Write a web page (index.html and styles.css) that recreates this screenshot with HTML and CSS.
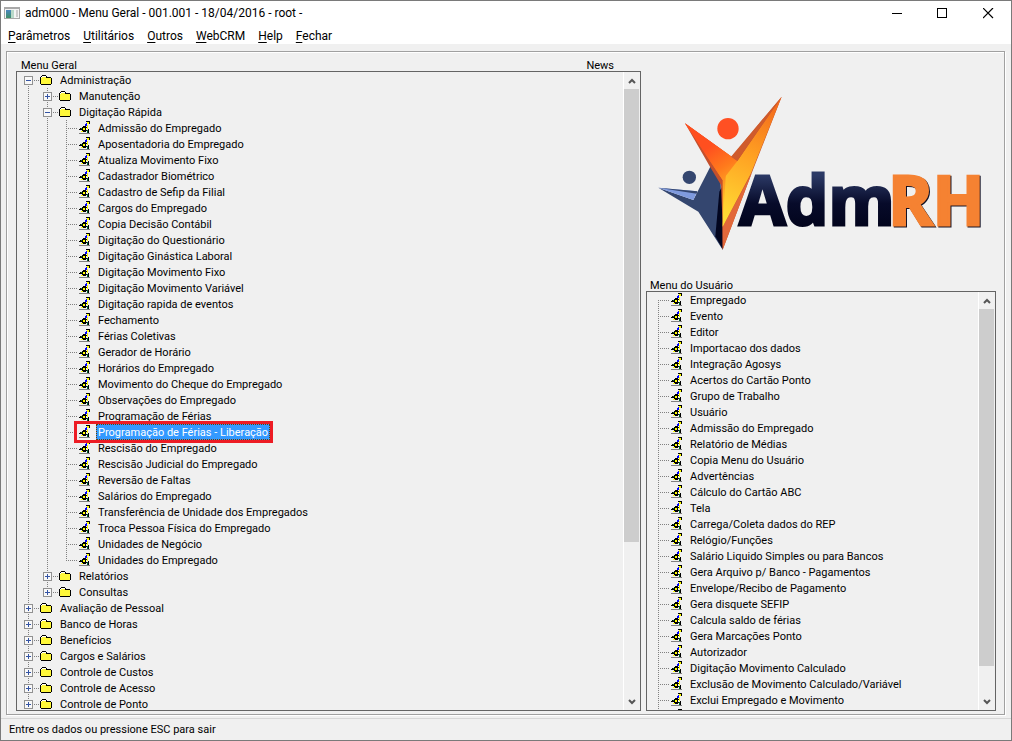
FILE: index.html
```html
<!DOCTYPE html>
<html lang="pt-BR">
<head>
<meta charset="utf-8">
<title>adm000 - Menu Geral</title>
<link rel="stylesheet" href="styles.css">
</head>
<body>
<svg class="defs" aria-hidden="true">
  <symbol id="folder" viewBox="0 0 14 14" shape-rendering="crispEdges">
    <path fill="#000" d="M2 3h4v1h1v1h4v1h1v6h-1v1H1v-1H0V5h1V4h1z"/>
    <path fill="#fff" d="M2 4h4v1H2zM1 5h1v1H1z"/>
    <path fill="#fff83a" d="M2 5h4v1h5v6H1V6h1z"/>
    <path fill="#000" d="M6 5h5v1H6z"/>
  </symbol>
  <symbol id="person" viewBox="0 0 14 14" shape-rendering="crispEdges">
    <path fill="#808080" d="M1 13h11v1H1z"/>
    <path fill="#000" d="M8 1h4v1H8zM11 2h1v2h-1zM5 6h3v1H5zM4 7h5v1H4zM2 8h6v1H2zM1 9h7v1H1zM4 10h6v1H4zM5 11h3v1H5zM10 9h1v4h-1z"/>
    <path fill="#ff0" d="M9 2h2v2H9zM5 8h2v2H5zM9 5h1v4H9zM3 11h2v1H3z"/>
    <path fill="#00f" d="M8 3h1v1H8zM7 4h2v2H7z"/>
    <path fill="#063" d="M9 10h1v3H9zM3 8h1v1H3z"/>
  </symbol>
  <symbol id="up" viewBox="0 0 8 6"><path d="M1 5l3-3 3 3" fill="none" stroke="#555" stroke-width="2"/></symbol>
  <symbol id="down" viewBox="0 0 8 6"><path d="M1 1l3 3 3-3" fill="none" stroke="#555" stroke-width="2"/></symbol>
  <symbol id="plus" viewBox="0 0 9 9" shape-rendering="crispEdges">
    <path fill="#919191" d="M0 0h9v9H0z"/><path fill="#f8f8f8" d="M1 1h7v7H1z"/><path fill="#3454a4" d="M2 4h5v1H2zM4 2h1v5H4z"/>
  </symbol>
  <symbol id="minus" viewBox="0 0 9 9" shape-rendering="crispEdges">
    <path fill="#919191" d="M0 0h9v9H0z"/><path fill="#f8f8f8" d="M1 1h7v7H1z"/><path fill="#3454a4" d="M2 4h5v1H2z"/>
  </symbol>
</svg>
<div class="window">
  <header class="header">
    <div class="titlebar">
      <svg class="app-icon" width="16" height="12" viewBox="0 0 16 12" aria-hidden="true">
        <defs><linearGradient id="screen" x2="0" y2="1"><stop stop-color="#4a86c0"/><stop offset="1" stop-color="#3f8f66"/></linearGradient></defs>
        <path fill="#a8a8a8" d="M0 0h16v12H0z"/><path fill="#f4f4f4" d="M1 2h14v9H1z"/>
        <path fill="url(#screen)" d="M2 3h5v8H2z"/><path fill="#b9d8c8" d="M7 3h3v8H7z"/><path fill="#ccc" d="M12 3h2v7h-2z"/>
      </svg>
      <span class="title">adm000 - Menu Geral - 001.001 - 18/04/2016 - root -</span>
      <button class="win-btn" type="button" aria-label="Minimizar"><svg width="11" height="11" shape-rendering="crispEdges"><path d="M1 5h10v1H1z"/></svg></button>
      <button class="win-btn" type="button" aria-label="Maximizar"><svg width="11" height="11" shape-rendering="crispEdges"><path d="M0 0h10v10H0zM1 1v8h8V1z" fill-rule="evenodd"/></svg></button>
      <button class="win-btn" type="button" aria-label="Fechar janela"><svg width="11" height="11"><path d="M0 0l10 10M10 0L0 10" stroke="#000" stroke-width="1.200"/></svg></button>
    </div>
    <nav class="menubar">
      <button type="button"><u>P</u>arâmetros</button>
      <button type="button"><u>U</u>tilitários</button>
      <button type="button"><u>O</u>utros</button>
      <button type="button"><u>W</u>ebCRM</button>
      <button type="button"><u>H</u>elp</button>
      <button type="button"><u>F</u>echar</button>
    </nav>
  </header>
  <main class="frame">
    <section class="column">
      <div class="caption caption-main"><span>Menu Geral</span><span class="news">News</span></div>
      <div class="box">
        <ul class="tree">
          <li><button class="toggle" type="button" aria-label="Recolher"><svg><use href="#minus"/></svg></button><div class="node"><svg><use href="#folder"/></svg><span>Administração</span></div>
            <ul>
              <li><button class="toggle" type="button" aria-label="Expandir"><svg><use href="#plus"/></svg></button><div class="node"><svg><use href="#folder"/></svg><span>Manutenção</span></div></li>
              <li><button class="toggle" type="button" aria-label="Recolher"><svg><use href="#minus"/></svg></button><div class="node"><svg><use href="#folder"/></svg><span>Digitação Rápida</span></div>
                <ul>
                  <li><div class="node"><svg><use href="#person"/></svg><span>Admissão do Empregado</span></div></li>
                  <li><div class="node"><svg><use href="#person"/></svg><span>Aposentadoria do Empregado</span></div></li>
                  <li><div class="node"><svg><use href="#person"/></svg><span>Atualiza Movimento Fixo</span></div></li>
                  <li><div class="node"><svg><use href="#person"/></svg><span>Cadastrador Biométrico</span></div></li>
                  <li><div class="node"><svg><use href="#person"/></svg><span>Cadastro de Sefip da Filial</span></div></li>
                  <li><div class="node"><svg><use href="#person"/></svg><span>Cargos do Empregado</span></div></li>
                  <li><div class="node"><svg><use href="#person"/></svg><span>Copia Decisão Contábil</span></div></li>
                  <li><div class="node"><svg><use href="#person"/></svg><span>Digitação do Questionário</span></div></li>
                  <li><div class="node"><svg><use href="#person"/></svg><span>Digitação Ginástica Laboral</span></div></li>
                  <li><div class="node"><svg><use href="#person"/></svg><span>Digitação Movimento Fixo</span></div></li>
                  <li><div class="node"><svg><use href="#person"/></svg><span>Digitação Movimento Variável</span></div></li>
                  <li><div class="node"><svg><use href="#person"/></svg><span>Digitação rapida de eventos</span></div></li>
                  <li><div class="node"><svg><use href="#person"/></svg><span>Fechamento</span></div></li>
                  <li><div class="node"><svg><use href="#person"/></svg><span>Férias Coletivas</span></div></li>
                  <li><div class="node"><svg><use href="#person"/></svg><span>Gerador de Horário</span></div></li>
                  <li><div class="node"><svg><use href="#person"/></svg><span>Horários do Empregado</span></div></li>
                  <li><div class="node"><svg><use href="#person"/></svg><span>Movimento do Cheque do Empregado</span></div></li>
                  <li><div class="node"><svg><use href="#person"/></svg><span>Observações do Empregado</span></div></li>
                  <li><div class="node"><svg><use href="#person"/></svg><span>Programação de Férias</span></div></li>
                  <li><div class="node selected"><svg><use href="#person"/></svg><span>Programação de Férias - Liberação</span></div></li>
                  <li><div class="node"><svg><use href="#person"/></svg><span>Rescisão do Empregado</span></div></li>
                  <li><div class="node"><svg><use href="#person"/></svg><span>Rescisão Judicial do Empregado</span></div></li>
                  <li><div class="node"><svg><use href="#person"/></svg><span>Reversão de Faltas</span></div></li>
                  <li><div class="node"><svg><use href="#person"/></svg><span>Salários do Empregado</span></div></li>
                  <li><div class="node"><svg><use href="#person"/></svg><span>Transferência de Unidade dos Empregados</span></div></li>
                  <li><div class="node"><svg><use href="#person"/></svg><span>Troca Pessoa Física do Empregado</span></div></li>
                  <li><div class="node"><svg><use href="#person"/></svg><span>Unidades de Negócio</span></div></li>
                  <li><div class="node"><svg><use href="#person"/></svg><span>Unidades do Empregado</span></div></li>
                </ul>
              </li>
              <li><button class="toggle" type="button" aria-label="Expandir"><svg><use href="#plus"/></svg></button><div class="node"><svg><use href="#folder"/></svg><span>Relatórios</span></div></li>
              <li><button class="toggle" type="button" aria-label="Expandir"><svg><use href="#plus"/></svg></button><div class="node"><svg><use href="#folder"/></svg><span>Consultas</span></div></li>
            </ul>
          </li>
          <li><button class="toggle" type="button" aria-label="Expandir"><svg><use href="#plus"/></svg></button><div class="node"><svg><use href="#folder"/></svg><span>Avaliação de Pessoal</span></div></li>
          <li><button class="toggle" type="button" aria-label="Expandir"><svg><use href="#plus"/></svg></button><div class="node"><svg><use href="#folder"/></svg><span>Banco de Horas</span></div></li>
          <li><button class="toggle" type="button" aria-label="Expandir"><svg><use href="#plus"/></svg></button><div class="node"><svg><use href="#folder"/></svg><span>Benefícios</span></div></li>
          <li><button class="toggle" type="button" aria-label="Expandir"><svg><use href="#plus"/></svg></button><div class="node"><svg><use href="#folder"/></svg><span>Cargos e Salários</span></div></li>
          <li><button class="toggle" type="button" aria-label="Expandir"><svg><use href="#plus"/></svg></button><div class="node"><svg><use href="#folder"/></svg><span>Controle de Custos</span></div></li>
          <li><button class="toggle" type="button" aria-label="Expandir"><svg><use href="#plus"/></svg></button><div class="node"><svg><use href="#folder"/></svg><span>Controle de Acesso</span></div></li>
          <li><button class="toggle" type="button" aria-label="Expandir"><svg><use href="#plus"/></svg></button><div class="node"><svg><use href="#folder"/></svg><span>Controle de Ponto</span></div></li>
        </ul>
        <div class="scrollbar">
          <button type="button" aria-label="Rolar para cima"><svg><use href="#up"/></svg></button>
          <div class="track"><div class="thumb" style="height:75%"></div></div>
          <button type="button" aria-label="Rolar para baixo"><svg><use href="#down"/></svg></button>
        </div>
      </div>
    </section>
    <section class="column side">
      <svg class="logo" viewBox="-12 -81 1050 660" role="img" aria-label="AdmRH">
        <defs>
          <linearGradient id="flame" gradientUnits="userSpaceOnUse" x1="170" y1="190" x2="280" y2="370">
            <stop stop-color="#ff4f1f"/><stop offset=".35" stop-color="#ff7a1c"/><stop offset=".8" stop-color="#ffc52a"/><stop offset="1" stop-color="#ffd83a"/>
          </linearGradient>
          <linearGradient id="arm" gradientUnits="userSpaceOnUse" x1="380" y1="60" x2="225" y2="400">
            <stop stop-color="#f26a1c"/><stop offset=".45" stop-color="#ffa022"/><stop offset="1" stop-color="#ffdc34"/>
          </linearGradient>
          <linearGradient id="navy" gradientUnits="userSpaceOnUse" x1="0" y1="270" x2="0" y2="425">
            <stop stop-color="#2c3a66"/><stop offset=".55" stop-color="#070b2a"/><stop offset="1" stop-color="#02041c"/>
          </linearGradient>
        </defs>
        <path fill="#34466f" d="M25 308L130 345 182 243 212 290 218 494 145 380z"/>
        <path fill="#7f9ade" d="M25 308L142 319 130 345z"/>
        <path fill="#34466f" d="M25 308L142 319 140 326z"/>
        <path fill="#02051f" d="M208 320L219 300V494L196 454z"/>
        <path fill="#c4502c" d="M105 115L245 215 395 35 305 265 218 494 217 400 213 300 180 245z"/>
        <path fill="#e2683a" d="M305 265L218 425V494z"/>
        <path fill="url(#flame)" d="M105 115L245 215 263 228 300 200 218 425V285z"/>
        <path fill="url(#arm)" d="M395 35L262 228 228 260 218 425 303 265z"/>
        <path fill="url(#flame)" d="M105 115L245 215 262 228 218 285z"/>
        <path fill="#cf5b2c" d="M395 35L243 215 262 228z"/>
        <circle cx="234" cy="131" r="32" fill="#ff5023"/>
        <circle cx="118" cy="277" r="20" fill="#34466f"/>
        <text class="logo-text" x="268" y="421" fill="url(#navy)" stroke="url(#navy)">Adm</text>
        <text class="logo-text" x="718" y="423" fill="#101024" stroke="#101024">RH</text>
        <text class="logo-text" x="715" y="420" fill="#f58232" stroke="#f58232">RH</text>
      </svg>
      <div class="caption caption-user">Menu do Usuário</div>
      <div class="box">
        <ul class="tree">
          <li><div class="node"><svg><use href="#person"/></svg><span>Empregado</span></div></li>
          <li><div class="node"><svg><use href="#person"/></svg><span>Evento</span></div></li>
          <li><div class="node"><svg><use href="#person"/></svg><span>Editor</span></div></li>
          <li><div class="node"><svg><use href="#person"/></svg><span>Importacao dos dados</span></div></li>
          <li><div class="node"><svg><use href="#person"/></svg><span>Integração Agosys</span></div></li>
          <li><div class="node"><svg><use href="#person"/></svg><span>Acertos do Cartão Ponto</span></div></li>
          <li><div class="node"><svg><use href="#person"/></svg><span>Grupo de Trabalho</span></div></li>
          <li><div class="node"><svg><use href="#person"/></svg><span>Usuário</span></div></li>
          <li><div class="node"><svg><use href="#person"/></svg><span>Admissão do Empregado</span></div></li>
          <li><div class="node"><svg><use href="#person"/></svg><span>Relatório de Médias</span></div></li>
          <li><div class="node"><svg><use href="#person"/></svg><span>Copia Menu do Usuário</span></div></li>
          <li><div class="node"><svg><use href="#person"/></svg><span>Advertências</span></div></li>
          <li><div class="node"><svg><use href="#person"/></svg><span>Cálculo do Cartão ABC</span></div></li>
          <li><div class="node"><svg><use href="#person"/></svg><span>Tela</span></div></li>
          <li><div class="node"><svg><use href="#person"/></svg><span>Carrega/Coleta dados do REP</span></div></li>
          <li><div class="node"><svg><use href="#person"/></svg><span>Relógio/Funções</span></div></li>
          <li><div class="node"><svg><use href="#person"/></svg><span>Salário Liquido Simples ou para Bancos</span></div></li>
          <li><div class="node"><svg><use href="#person"/></svg><span>Gera Arquivo p/ Banco - Pagamentos</span></div></li>
          <li><div class="node"><svg><use href="#person"/></svg><span>Envelope/Recibo de Pagamento</span></div></li>
          <li><div class="node"><svg><use href="#person"/></svg><span>Gera disquete SEFIP</span></div></li>
          <li><div class="node"><svg><use href="#person"/></svg><span>Calcula saldo de férias</span></div></li>
          <li><div class="node"><svg><use href="#person"/></svg><span>Gera Marcações Ponto</span></div></li>
          <li><div class="node"><svg><use href="#person"/></svg><span>Autorizador</span></div></li>
          <li><div class="node"><svg><use href="#person"/></svg><span>Digitação Movimento Calculado</span></div></li>
          <li><div class="node"><svg><use href="#person"/></svg><span>Exclusão de Movimento Calculado/Variável</span></div></li>
          <li><div class="node"><svg><use href="#person"/></svg><span>Exclui Empregado e Movimento</span></div></li>
          <li><div class="node"><svg><use href="#person"/></svg></div></li>
        </ul>
        <div class="scrollbar">
          <button type="button" aria-label="Rolar para cima"><svg><use href="#up"/></svg></button>
          <div class="track"><div class="thumb" style="height:93%"></div></div>
          <button type="button" aria-label="Rolar para baixo"><svg><use href="#down"/></svg></button>
        </div>
      </div>
    </section>
  </main>
  <footer class="status">Entre os dados ou pressione ESC para sair</footer>
</div>
</body>
</html>
```
FILE: styles.css
```css
* { box-sizing: border-box; }
body { margin: 0; background: #f0f0f0; color: #000; font: 11px/16px Roboto, "Liberation Sans", sans-serif; }
ul { margin: 0; padding: 0; list-style: none; }
button { margin: 0; padding: 0; border: 0; background: none; color: inherit; font: inherit; }
svg { display: block; }
.defs { position: absolute; width: 0; height: 0; }

.window { display: flex; flex-direction: column; height: 100vh; border: 1px solid #7a7a7a; background: #f0f0f0; }
.header { background: #fff; font-size: 12px; }
.titlebar { display: flex; align-items: center; height: 24px; padding-left: 3px; }
.app-icon { margin-right: 5px; }
.title { flex: 1; }
.win-btn { display: flex; align-items: center; justify-content: center; width: 46px; height: 24px; }
.menubar { display: flex; gap: 13px; padding: 2px 7px 0; height: 19px; line-height: 18px; }
.menubar u { text-underline-offset: 2px; }

.frame { flex: 1; min-height: 0; display: grid; grid-template-columns: 625fr 350fr; gap: 5px; margin: 7px 6px 3px 5px; padding: 6px 8px 3px 9px; border: 1px solid #a0a0a0; box-shadow: inset 1px 1px #fff, 1px 1px #fff; }
.column { display: flex; flex-direction: column; min-width: 0; min-height: 0; }
.caption { flex: none; height: 13px; line-height: 15px; padding-left: 4px; }
.caption-main { display: flex; justify-content: space-between; padding: 0 27px 0 5px; }
.logo { flex: none; width: 100%; height: 220px; }
.logo-text { font: 700 202px "Open Sans", "Noto Sans", sans-serif; stroke-width: 9px; }

.box { flex: 1; min-height: 0; display: flex; border: 1px solid #646464; overflow: hidden; }
.tree { flex: 1; min-width: 0; padding-left: 2px; overflow: hidden; }
.tree li { position: relative; padding-left: 19px; white-space: nowrap; }
.tree li::before { content: ""; position: absolute; left: 9px; top: 0; bottom: 0; width: 1px; background: repeating-linear-gradient(#808080 0 1px, transparent 1px 2px); }
.tree li::after { content: ""; position: absolute; left: 9px; top: 8px; width: 11px; height: 1px; background: repeating-linear-gradient(90deg, #808080 0 1px, transparent 1px 2px); }
.tree > li:first-child::before { top: 8px; }
.tree ul > li:last-child::before { bottom: auto; height: 9px; }
.toggle { position: absolute; z-index: 1; left: 5px; top: 4px; width: 9px; height: 9px; }
.toggle svg { width: 9px; height: 9px; }
.node { display: flex; align-items: flex-start; gap: 4px; width: max-content; height: 16px; padding-left: 2px; }
.node svg { width: 14px; height: 14px; }
.node span { padding: 2px 2px 0; line-height: 14px; }
.selected { position: relative; z-index: 1; }
.selected span { background: #3399ff; color: #fff; outline: 1px dotted #6b3a00; outline-offset: -1px; }
.selected::after { content: ""; position: absolute; inset: -3px -3px -3px -2px; border: 3px solid #ed1c24; }

.scrollbar { flex: none; display: flex; flex-direction: column; width: 17px; padding-right: 1px; border-left: 1px solid #fff; }
.scrollbar button { display: flex; align-items: center; justify-content: center; height: 17px; }
.scrollbar button svg { width: 8px; height: 6px; }
.track { flex: 1; }
.thumb { background: #cdcdcd; }
.status { flex: none; height: 22px; padding-left: 8px; border-top: 1px solid #d7d7d7; line-height: 21px; }
```
